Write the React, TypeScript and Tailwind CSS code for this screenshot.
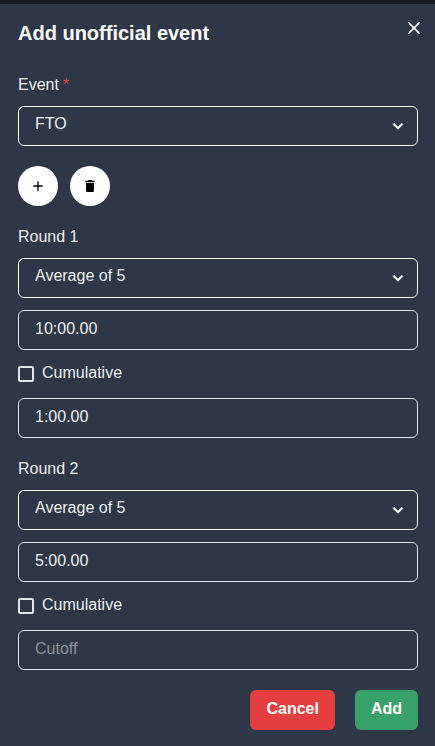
import { useId, useState } from "react";

function Chevron() {
  return (
    <svg
      viewBox="0 0 24 24"
      aria-hidden="true"
      className="pointer-events-none absolute right-2.5 top-2.5 size-5 fill-white stroke-white stroke-[0.6]"
    >
      <path d="M16.59 8.59L12 13.17 7.41 8.59 6 10l6 6 6-6z" />
    </svg>
  );
}

type SelectFieldProps = {
  id: string;
  options: string[];
};

function SelectField({ id, options }: SelectFieldProps) {
  return (
    <div className="relative">
      <select
        id={id}
        className="block h-10 w-full appearance-none rounded-md border border-white bg-[#2d3748] px-4 pb-1 text-base text-white/95"
      >
        {options.map((option) => (
          <option key={option}>{option}</option>
        ))}
      </select>
      <Chevron />
    </div>
  );
}

type TimeInputProps = {
  label: string;
  initial: string;
};

function TimeInput({ label, initial }: TimeInputProps) {
  return (
    <input
      type="text"
      aria-label={label}
      placeholder={label}
      defaultValue={initial}
      className="block h-10 w-full rounded-md border border-[#e2e8f0] bg-transparent px-4 pb-0.5 text-base text-white/95 placeholder:text-[#8e939b]"
    />
  );
}

type RoundProps = {
  number: number;
  limit: string;
  cutoff: string;
};

function Round({ number, limit, cutoff }: RoundProps) {
  const id = useId();
  const [cumulative, setCumulative] = useState(false);
  return (
    <section className="flex flex-col gap-3">
      <div>
        <label htmlFor={id} className="mb-2 block h-6 leading-[22px] text-white/95">
          Round {number}
        </label>
        <SelectField id={id} options={["Average of 5", "Mean of 3", "Best of 3"]} />
      </div>
      <TimeInput label="Time limit" initial={limit} />
      <label className="flex h-6 gap-2 leading-[22px] text-white/95">
        <input
          type="checkbox"
          checked={cumulative}
          onChange={() => setCumulative(!cumulative)}
          className="mt-1 size-4 appearance-none rounded-xs border-2 border-[#e2e8f0] checked:bg-[#e2e8f0]"
        />
        Cumulative
      </label>
      <TimeInput label="Cutoff" initial={cutoff} />
    </section>
  );
}

export default function App() {
  return (
    <div className="min-h-screen border-t-4 border-[#171c26] bg-[#2d3748] font-['Liberation_Sans',Arial,sans-serif] text-base">
      <div role="dialog" aria-labelledby="dialog-title" className="pb-4 pl-[18px] pr-[17px] pt-3.5">
        <header className="mb-6 flex h-8 items-start justify-between">
          <h2 id="dialog-title" className="text-xl leading-[30px] font-bold text-white">
            Add unofficial event
          </h2>
          <button type="button" aria-label="Close" className="-mr-1.5 flex size-5 items-center justify-center">
            <svg viewBox="0 0 12 12" className="size-3 stroke-white" fill="none" strokeWidth="1.5" strokeLinecap="round">
              <path d="M0.6 0.6L11.4 11.4M11.4 0.6L0.6 11.4" />
            </svg>
          </button>
        </header>
        <form className="flex flex-col gap-5" onSubmit={(e) => e.preventDefault()}>
          <div>
            <label htmlFor="event" className="mb-2 flex h-6 gap-1 leading-[22px] text-white/95">
              Event <span className="text-[#e53e3e]">*</span>
            </label>
            <SelectField id="event" options={["FTO", "Mirror Blocks", "Kilominx"]} />
          </div>
          <div className="flex gap-3">
            <button type="button" aria-label="Add round" className="flex size-10 items-center justify-center rounded-full bg-white">
              <svg viewBox="0 0 24 24" className="size-4 fill-black">
                <path d="M19 13h-6v6h-2v-6H5v-2h6V5h2v6h6v2z" />
              </svg>
            </button>
            <button type="button" aria-label="Remove round" className="flex size-10 items-center justify-center rounded-full bg-white">
              <svg viewBox="0 0 24 24" className="size-4 fill-black">
                <path d="M19 4h-3.5l-1-1h-5l-1 1H5v2h14M6 19a2 2 0 0 0 2 2h8a2 2 0 0 0 2-2V7H6v12z" />
              </svg>
            </button>
          </div>
          <Round number={1} limit="10:00.00" cutoff="1:00.00" />
          <Round number={2} limit="5:00.00" cutoff="" />
          <div className="flex justify-end gap-5 font-bold text-white">
            <button type="button" className="h-10 rounded-md bg-[#e53e3e] px-4 pb-0.5">
              Cancel
            </button>
            <button type="submit" className="h-10 rounded-md bg-[#38a169] px-4 pb-0.5">
              Add
            </button>
          </div>
        </form>
      </div>
    </div>
  );
}
